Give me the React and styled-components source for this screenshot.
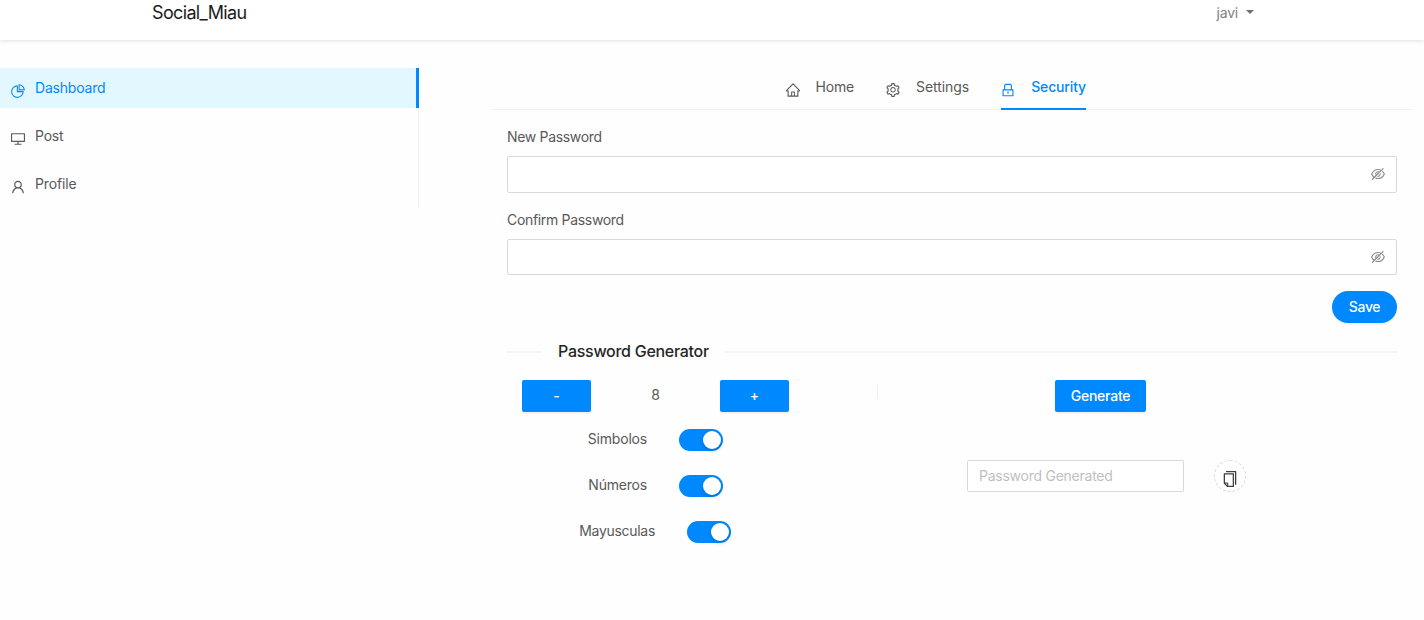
import React from 'react';
import styled, { createGlobalStyle } from 'styled-components';
import {
  AiOutlinePieChart, AiOutlineDesktop, AiOutlineUser, AiOutlineHome,
  AiOutlineSetting, AiOutlineLock, AiOutlineEyeInvisible, AiOutlineCopy,
} from 'react-icons/ai';

const blue = '#0088ff';

const GlobalStyle = createGlobalStyle`
  *, *::before, *::after { box-sizing: border-box; }
  body {
    margin: 0;
    background: #fefefe;
    color: #595959;
    font: 400 14px/22px Inter, "Liberation Sans", sans-serif;
    overflow: hidden;
  }
  svg { display: block; flex: none; }
  button, input { font: inherit; margin: 0; }
`;

const Label = styled.span`
  letter-spacing: ${(p) => p.$ls || 0}px;
  white-space: nowrap;
`;

const Header = styled.header`
  display: flex;
  justify-content: space-between;
  height: 40px;
  padding: 0 170px 0 152px;
  background: #fff;
  box-shadow: 0 1px 4px rgba(0, 21, 41, 0.12);
`;

const Brand = styled.div`
  font-size: 18px;
  line-height: 25px;
  color: #1c1c1c;
`;

const UserMenu = styled.div`
  display: flex;
  align-items: flex-start;
  gap: 8px;
  line-height: 26px;
  color: #808080;
`;

const Caret = styled.i`
  margin-top: 10px;
  border: 4px solid transparent;
  border-top-color: #707070;
  border-bottom: 0;
`;

const Main = styled.main`
  display: grid;
  grid-template-columns: 419px 920px;
  column-gap: 73px;
  padding-top: 24px;
`;

const Side = styled.nav`
  display: flex;
  flex-direction: column;
  gap: 8px;
  height: 144px;
  padding: 4px 0;
  border-right: 1px solid #f0f0f0;
`;

const SideItem = styled.a`
  display: flex;
  gap: 10px;
  height: 40px;
  padding-left: 11px;
  line-height: 40px;
  color: ${(p) => (p.$active ? blue : '#595959')};
  background: ${(p) => (p.$active ? '#e3f7ff' : 'transparent')};
  border-right: ${(p) => (p.$active ? `3px solid ${blue}` : '0')};
  margin-right: ${(p) => (p.$active ? '-1px' : '0')};
  svg { margin-top: 16px; }
`;

const Tabs = styled.div`
  display: flex;
  justify-content: center;
  gap: 32px;
  height: 46px;
  padding-right: 32px;
  border-bottom: 1px solid #f0f0f0;
`;

const Tab = styled.div`
  display: flex;
  justify-content: space-between;
  width: ${(p) => p.$w}px;
  height: 46px;
  padding-top: 12px;
  color: ${(p) => (p.$active ? blue : '#595959')};
  font-weight: ${(p) => (p.$active ? 500 : 400)};
  border-bottom: 2px solid ${(p) => (p.$active ? blue : 'transparent')};
  svg { margin-top: 7px; }
`;

const Panel = styled.section`
  padding: 16px 15px 0;
`;

const Field = styled.label`
  display: flex;
  flex-direction: column;
  gap: 8px;
  margin-bottom: 16px;
`;

const PasswordBox = styled.div`
  display: flex;
  align-items: flex-start;
  justify-content: flex-end;
  height: ${(p) => p.$h}px;
  padding: 10px 11px 0;
  background: #fff;
  border: 1px solid #d9d9d9;
  border-radius: 2px;
  color: #8c8c8c;
`;

const Button = styled.button`
  width: ${(p) => p.$w}px;
  height: 32px;
  padding: 0;
  border: 0;
  border-radius: ${(p) => (p.$round ? 16 : 2)}px;
  background: ${blue};
  color: #fff;
  font-weight: 500;
  box-shadow: 0 2px 0 rgba(0, 0, 0, 0.045);
`;

const Actions = styled.div`
  display: flex;
  justify-content: flex-end;
`;

const Divider = styled.h2`
  display: flex;
  align-items: center;
  margin: 16px 0;
  font-size: 16px;
  line-height: 25px;
  font-weight: 500;
  color: #262626;
  &::before, &::after { content: ''; height: 2px; background: #f5f5f5; }
  &::before { width: 35px; margin-right: 16px; }
  &::after { flex: 1; margin-left: 15px; }
`;

const Generator = styled.div`
  display: grid;
  grid-template-columns: 370px 1px 1fr;
`;

const Options = styled.div`
  display: flex;
  flex-direction: column;
`;

const Counter = styled.div`
  display: flex;
  align-items: flex-start;
  justify-content: space-between;
  width: 267px;
  margin: 0 0 17px 15px;
`;

const Count = styled.span`
  line-height: 30px;
`;

const Option = styled.div`
  display: flex;
  justify-content: flex-end;
  gap: 32px;
  width: ${(p) => p.$w}px;
  height: 22px;
  margin-bottom: 24px;
  line-height: 20px;
`;

const Switch = styled.span`
  display: flex;
  justify-content: flex-end;
  width: 44px;
  height: 22px;
  padding: 2px;
  border-radius: 11px;
  background: ${blue};
  &::after {
    content: '';
    width: 18px;
    height: 18px;
    border-radius: 9px;
    background: #fff;
    box-shadow: 0 2px 4px rgba(0, 35, 11, 0.2);
  }
`;

const Separator = styled.div`
  height: 13px;
  margin-top: 5px;
  background: #f0f0f0;
`;

const Output = styled.div`
  display: flex;
  flex-direction: column;
  gap: 48px;
  padding-left: 89px;
`;

const GenerateRow = styled.div`
  padding-left: 88px;
`;

const ResultRow = styled.div`
  display: flex;
  gap: 30px;
`;

const Result = styled.input`
  width: 217px;
  height: 32px;
  padding: 0 11px 2px;
  background: #fff;
  border: 1px solid #d9d9d9;
  border-radius: 2px;
  &::placeholder { color: #bfbfbf; letter-spacing: -0.25px; }
`;

const CopyButton = styled.button`
  display: flex;
  justify-content: center;
  width: 32px;
  height: 32px;
  padding: 10px 0 0;
  background: #fff;
  border: 1px dashed #d9d9d9;
  border-radius: 50%;
  color: #404040;
`;

/* Trims the empty margin of the 1024-unit icon grid. */
const Icon = ({ as: Glyph, size = 14 }) => (
  <Glyph size={size} viewBox="64 64 896 896" />
);

export default function App() {
  return (
    <>
      <GlobalStyle />
      <Header>
        <Brand><Label $ls={-0.65}>Social_Miau</Label></Brand>
        <UserMenu><Label $ls={-0.2}>javi</Label><Caret /></UserMenu>
      </Header>
      <Main>
        <Side>
          <SideItem $active><Icon as={AiOutlinePieChart} /><Label $ls={-0.2}>Dashboard</Label></SideItem>
          <SideItem><Icon as={AiOutlineDesktop} /><Label $ls={-0.2}>Post</Label></SideItem>
          <SideItem><Icon as={AiOutlineUser} /><Label $ls={-0.15}>Profile</Label></SideItem>
        </Side>
        <div>
          <Tabs>
            <Tab $w={68}><Icon as={AiOutlineHome} /><Label $ls={-0.2}>Home</Label></Tab>
            <Tab $w={83}><Icon as={AiOutlineSetting} /><Label $ls={-0.08}>Settings</Label></Tab>
            <Tab $w={85} $active><Icon as={AiOutlineLock} /><Label $ls={-0.15}>Security</Label></Tab>
          </Tabs>
          <Panel>
            <Field>
              <Label $ls={-0.33}>New Password</Label>
              <PasswordBox $h={37}><Icon as={AiOutlineEyeInvisible} /></PasswordBox>
            </Field>
            <Field>
              <Label $ls={-0.32}>Confirm Password</Label>
              <PasswordBox $h={36}><Icon as={AiOutlineEyeInvisible} /></PasswordBox>
            </Field>
            <Actions><Button $w={65} $round><Label $ls={-0.3}>Save</Label></Button></Actions>
            <Divider><Label $ls={-0.28}>Password Generator</Label></Divider>
            <Generator>
              <Options>
                <Counter>
                  <Button $w={69}>-</Button>
                  <Count>8</Count>
                  <Button $w={69}>+</Button>
                </Counter>
                <Option $w={216}><Label $ls={-0.2}>Simbolos</Label><Switch /></Option>
                <Option $w={216}><Label $ls={-0.2}>Números</Label><Switch /></Option>
                <Option $w={224}><Label $ls={-0.3}>Mayusculas</Label><Switch /></Option>
              </Options>
              <Separator />
              <Output>
                <GenerateRow><Button $w={91}><Label $ls={-0.25}>Generate</Label></Button></GenerateRow>
                <ResultRow>
                  <Result placeholder="Password Generated" />
                  <CopyButton aria-label="Copy"><Icon as={AiOutlineCopy} size={16} /></CopyButton>
                </ResultRow>
              </Output>
            </Generator>
          </Panel>
        </div>
      </Main>
    </>
  );
}
